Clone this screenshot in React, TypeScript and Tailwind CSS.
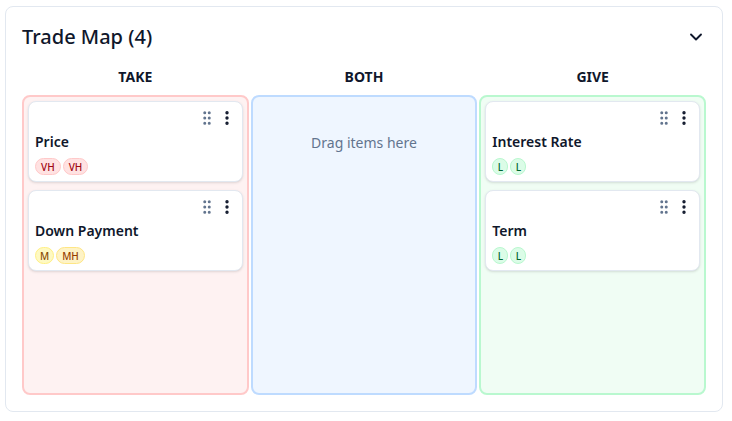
import React from 'react';
import { ChevronDown, GripVertical, EllipsisVertical } from 'lucide-react';

type Level = 'VH' | 'MH' | 'M' | 'L';

interface Item {
  name: string;
  levels: Level[];
}

const levelClasses: Record<Level, string> = {
  VH: 'bg-red-100 border-red-200 text-red-800 px-[5px]',
  MH: 'bg-amber-100 border-amber-200 text-amber-800 px-[5px]',
  M: 'bg-yellow-100 border-yellow-200 text-yellow-800 px-[4px]',
  L: 'bg-green-100 border-green-200 text-green-800 w-4 justify-center',
};

const columns: {
  title: string;
  box: string;
  items: Item[];
}[] = [
  {
    title: 'TAKE',
    box: 'border-red-200 bg-red-50',
    items: [
      { name: 'Price', levels: ['VH', 'VH'] },
      { name: 'Down Payment', levels: ['M', 'MH'] },
    ],
  },
  {
    title: 'BOTH',
    box: 'border-blue-200 bg-blue-50',
    items: [],
  },
  {
    title: 'GIVE',
    box: 'border-green-200 bg-green-50',
    items: [
      { name: 'Interest Rate', levels: ['L', 'L'] },
      { name: 'Term', levels: ['L', 'L'] },
    ],
  },
];

const Badge: React.FC<{ level: Level }> = ({ level }) => (
  <span
    className={`flex h-[17px] min-w-4 items-center rounded-full border text-[10px] font-medium leading-none ${levelClasses[level]}`}
  >
    {level}
  </span>
);

const TradeCard: React.FC<{ item: Item }> = ({ item }) => (
  <div className="rounded-lg border border-slate-200 bg-white p-1.5 shadow-sm">
    <div className="flex h-5 items-center justify-end gap-[2px]">
      <GripVertical size={18} className="text-slate-500" />
      <EllipsisVertical size={18} strokeWidth={2.5} className="text-slate-900" />
    </div>
    <div className="mt-1 text-sm font-semibold leading-5 text-slate-900">{item.name}</div>
    <div className="mt-1.5 flex gap-0.5">
      {item.levels.map((l, i) => (
        <Badge key={i} level={l} />
      ))}
    </div>
  </div>
);

export default function App() {
  return (
    <div
      className="ml-[5px] mt-[6px] flex h-[406px] w-[718px] flex-col rounded-lg border border-slate-200 bg-white p-4"
      style={{ fontFamily: '"Noto Sans", sans-serif' }}
    >
      {/* Header */}
      <div className="flex h-7 items-center justify-between">
        <h2 className="text-xl font-medium leading-7 text-slate-900">Trade Map (4)</h2>
        <ChevronDown size={20} strokeWidth={2.25} className="text-slate-900" />
      </div>

      {/* Column labels */}
      <div className="mt-4 mb-2 grid grid-cols-3 gap-[2px]">
        {columns.map((c) => (
          <div key={c.title} className="text-center text-sm font-bold leading-5 text-slate-900">
            {c.title}
          </div>
        ))}
      </div>

      {/* Columns */}
      <div className="grid flex-1 grid-cols-3 gap-[2px]">
        {columns.map((c) => (
          <div key={c.title} className={`rounded-lg border-2 p-1 ${c.box}`}>
            {c.items.length === 0 ? (
              <div className="pt-[32px] text-center text-sm leading-5 text-slate-500">
                Drag items here
              </div>
            ) : (
              <div className="space-y-2">
                {c.items.map((it) => (
                  <TradeCard key={it.name} item={it} />
                ))}
              </div>
            )}
          </div>
        ))}
      </div>
    </div>
  );
}
